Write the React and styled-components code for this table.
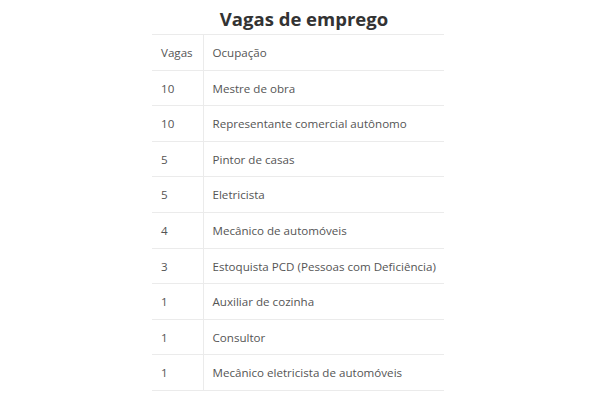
import React from "react";
import styled, { createGlobalStyle } from "styled-components";

const Global = createGlobalStyle`
  html, body { margin: 0; padding: 0; background: #fff; }
  body { font-family: "Open Sans", "Liberation Sans", sans-serif; }
`;

const Wrapper = styled.div`
  width: 292px;
  margin-left: 152px;
`;

const Title = styled.h2`
  margin: 0;
  padding: 6px 0 0 12px;
  height: 28px;
  text-align: center;
  font-size: 18.5px;
  line-height: 26px;
  font-weight: 700;
  color: #333;
`;

const Table = styled.table`
  width: 292px;
  table-layout: fixed;
  border-collapse: collapse;
  font-size: 11.6px;
  color: #555;
`;

const Cell = styled.td`
  padding: 9px 9px 7px;
  line-height: 18.6px;
  border-top: 1px solid #ebebeb;
  border-bottom: ${(p) => (p.$last ? "1px solid #ebebeb" : "none")};
  border-right: ${(p) => (p.$first ? "1px solid #ebebeb" : "none")};
  width: ${(p) => (p.$first ? "51px" : "auto")};
  box-sizing: border-box;
  vertical-align: middle;
  white-space: nowrap;
`;

const rows = [
  ["Vagas", "Ocupação"],
  ["10", "Mestre de obra"],
  ["10", "Representante comercial autônomo"],
  ["5", "Pintor de casas"],
  ["5", "Eletricista"],
  ["4", "Mecânico de automóveis"],
  ["3", "Estoquista PCD (Pessoas com Deficiência)"],
  ["1", "Auxiliar de cozinha"],
  ["1", "Consultor"],
  ["1", "Mecânico eletricista de automóveis"],
];

export default function App() {
  return (
    <>
      <Global />
      <Wrapper>
        <Title>Vagas de emprego</Title>
        <Table>
          <tbody>
            {rows.map(([a, b], i) => (
              <tr key={i}>
                <Cell $first $last={i === rows.length - 1}>{a}</Cell>
                <Cell $last={i === rows.length - 1}>{b}</Cell>
              </tr>
            ))}
          </tbody>
        </Table>
      </Wrapper>
    </>
  );
}
